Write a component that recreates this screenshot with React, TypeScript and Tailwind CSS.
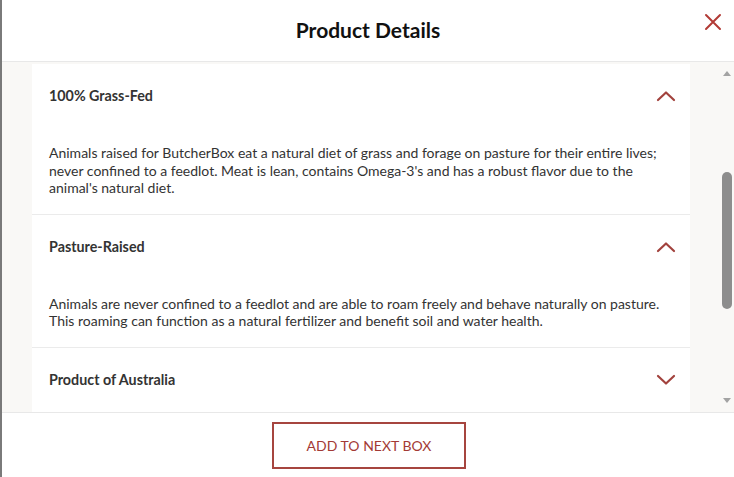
import { useState } from "react";

type Detail = {
  title: string;
  body?: string;
  open: boolean;
};

const details: Detail[] = [
  {
    title: "100% Grass-Fed",
    body: "Animals raised for ButcherBox eat a natural diet of grass and forage on pasture for their entire lives; never confined to a feedlot. Meat is lean, contains Omega-3's and has a robust flavor due to the animal's natural diet.",
    open: true,
  },
  {
    title: "Pasture-Raised",
    body: "Animals are never confined to a feedlot and are able to roam freely and behave naturally on pasture. This roaming can function as a natural fertilizer and benefit soil and water health.",
    open: true,
  },
  {
    title: "Product of Australia",
    body: "This product is sourced from trusted partners in Australia.",
    open: false,
  },
];

function Chevron({ up }: { up: boolean }) {
  return (
    <svg width="20" height="12" viewBox="0 0 20 12" fill="none" className="shrink-0">
      <path
        d={up ? "M2 10 L10 2.5 L18 10" : "M2 2 L10 9.5 L18 2"}
        stroke="#a2423d"
        strokeWidth="2.2"
        strokeLinecap="round"
        strokeLinejoin="round"
      />
    </svg>
  );
}

function AccordionItem({ item }: { item: Detail }) {
  const [open, setOpen] = useState(item.open);
  return (
    <div className="border-b border-[#ebebeb]">
      <button
        onClick={() => setOpen(!open)}
        className="w-full h-[64px] flex items-center justify-between pl-[17px] pr-[14px] text-left"
      >
        <span className="text-[14.3px] font-bold text-[#333]">{item.title}</span>
        <Chevron up={open} />
      </button>
      {open && (
        <p className="px-[17px] pt-[16px] pb-[17px] text-[14px] leading-[17.5px] text-[#333]">
          {item.body}
        </p>
      )}
    </div>
  );
}

export default function App() {
  return (
    <div
      className="w-[734px] h-[477px] bg-white border-l-2 border-[#7a7a7a] flex flex-col overflow-hidden"
      style={{ fontFamily: "Lato, 'Open Sans', sans-serif" }}
    >
      <header className="h-[62px] shrink-0 relative flex items-center justify-center border-b border-[#e8e8e8]">
        <h1 className="text-[21px] font-bold text-[#111] mt-[-2px]">Product Details</h1>
        <button className="absolute right-[12px] top-[13px]" aria-label="Close">
          <svg width="18" height="18" viewBox="0 0 18 18">
            <path d="M2 2 L16 16 M16 2 L2 16" stroke="#b23b36" strokeWidth="2" strokeLinecap="round" />
          </svg>
        </button>
      </header>

      <div className="h-[350px] shrink-0 flex bg-[#f9f8f6]">
        <div className="flex-1 overflow-hidden pl-[30px] pr-[30px] pt-[2px]">
          <div className="bg-white w-[658px]">
            {details.map((d) => (
              <AccordionItem key={d.title} item={d} />
            ))}
          </div>
        </div>
        <div className="w-[14px] shrink-0 flex flex-col items-center py-[6px]">
          <svg width="8" height="6" viewBox="0 0 8 6" className="mt-[2px]">
            <path d="M0 6 L4 1 L8 6 Z" fill="#a3a3a3" />
          </svg>
          <div className="flex-1 w-full flex flex-col px-[2px]">
            <div className="h-[96px]" />
            <div className="h-[137px] w-full rounded-full bg-[#8d8d8d]" />
          </div>
          <svg width="8" height="6" viewBox="0 0 8 6" className="mb-[2px]">
            <path d="M0 0 L4 5 L8 0 Z" fill="#a3a3a3" />
          </svg>
        </div>
      </div>

      <footer className="flex-1 border-t border-[#e8e8e8] flex justify-center pt-[9px]">
        <button className="w-[194px] h-[47px] border-2 border-[#a6453f] text-[#a33a35] text-[14px] ml-[2px]">
          ADD TO NEXT BOX
        </button>
      </footer>
    </div>
  );
}
